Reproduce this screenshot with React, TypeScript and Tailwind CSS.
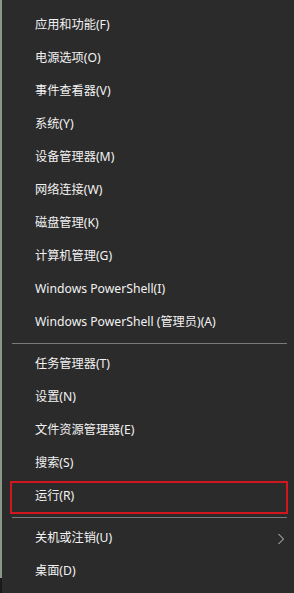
import React from 'react';

type Item = { label: string; sub?: boolean; marked?: boolean };

const GROUPS: Item[][] = [
  [
    { label: '应用和功能(F)' },
    { label: '电源选项(O)' },
    { label: '事件查看器(V)' },
    { label: '系统(Y)' },
    { label: '设备管理器(M)' },
    { label: '网络连接(W)' },
    { label: '磁盘管理(K)' },
    { label: '计算机管理(G)' },
    { label: 'Windows PowerShell(I)' },
    { label: 'Windows PowerShell (管理员)(A)' },
  ],
  [
    { label: '任务管理器(T)' },
    { label: '设置(N)' },
    { label: '文件资源管理器(E)' },
    { label: '搜索(S)' },
    { label: '运行(R)', marked: true },
  ],
  [{ label: '关机或注销(U)', sub: true }, { label: '桌面(D)' }],
];

function Row({ item }: { item: Item }) {
  return (
    <div className="relative flex h-[33px] items-center pl-[33px] pr-[8px]">
      <span className="text-[12.2px] leading-none text-[#f2f2f2]">{item.label}</span>
      {item.sub && (
        <svg
          className="ml-auto mr-[1px]"
          width="8"
          height="12"
          viewBox="0 0 8 12"
          fill="none"
          stroke="#cfcfcf"
          strokeWidth="1"
        >
          <path d="M1.5 1 L6.5 6 L1.5 11" />
        </svg>
      )}
      {item.marked && (
        <span className="pointer-events-none absolute left-[8px] right-[6px] top-[1px] bottom-[-1px] border-2 border-[#d2161e]" />
      )}
    </div>
  );
}

export default function App() {
  return (
    <div
      className="flex h-[593px] w-[294px] bg-[#2b2b2b]"
      style={{ fontFamily: '"Noto Sans", "Noto Sans CJK SC", sans-serif' }}
    >
      <div className="flex w-[2px] flex-col">
        <div className="flex-1 bg-[#8a988a]" />
        <div className="h-[15px] bg-[#1a1a1a]" />
      </div>
      <div className="flex flex-1 flex-col pt-[9px]">
        {GROUPS.map((group, gi) => (
          <div key={gi}>
            {gi > 0 && (
              <div className="py-[4px] pl-[10px] pr-[7px]">
                <div className="h-px bg-[#7a7a7a]" />
              </div>
            )}
            {group.map((it) => (
              <Row key={it.label} item={it} />
            ))}
          </div>
        ))}
      </div>
    </div>
  );
}
